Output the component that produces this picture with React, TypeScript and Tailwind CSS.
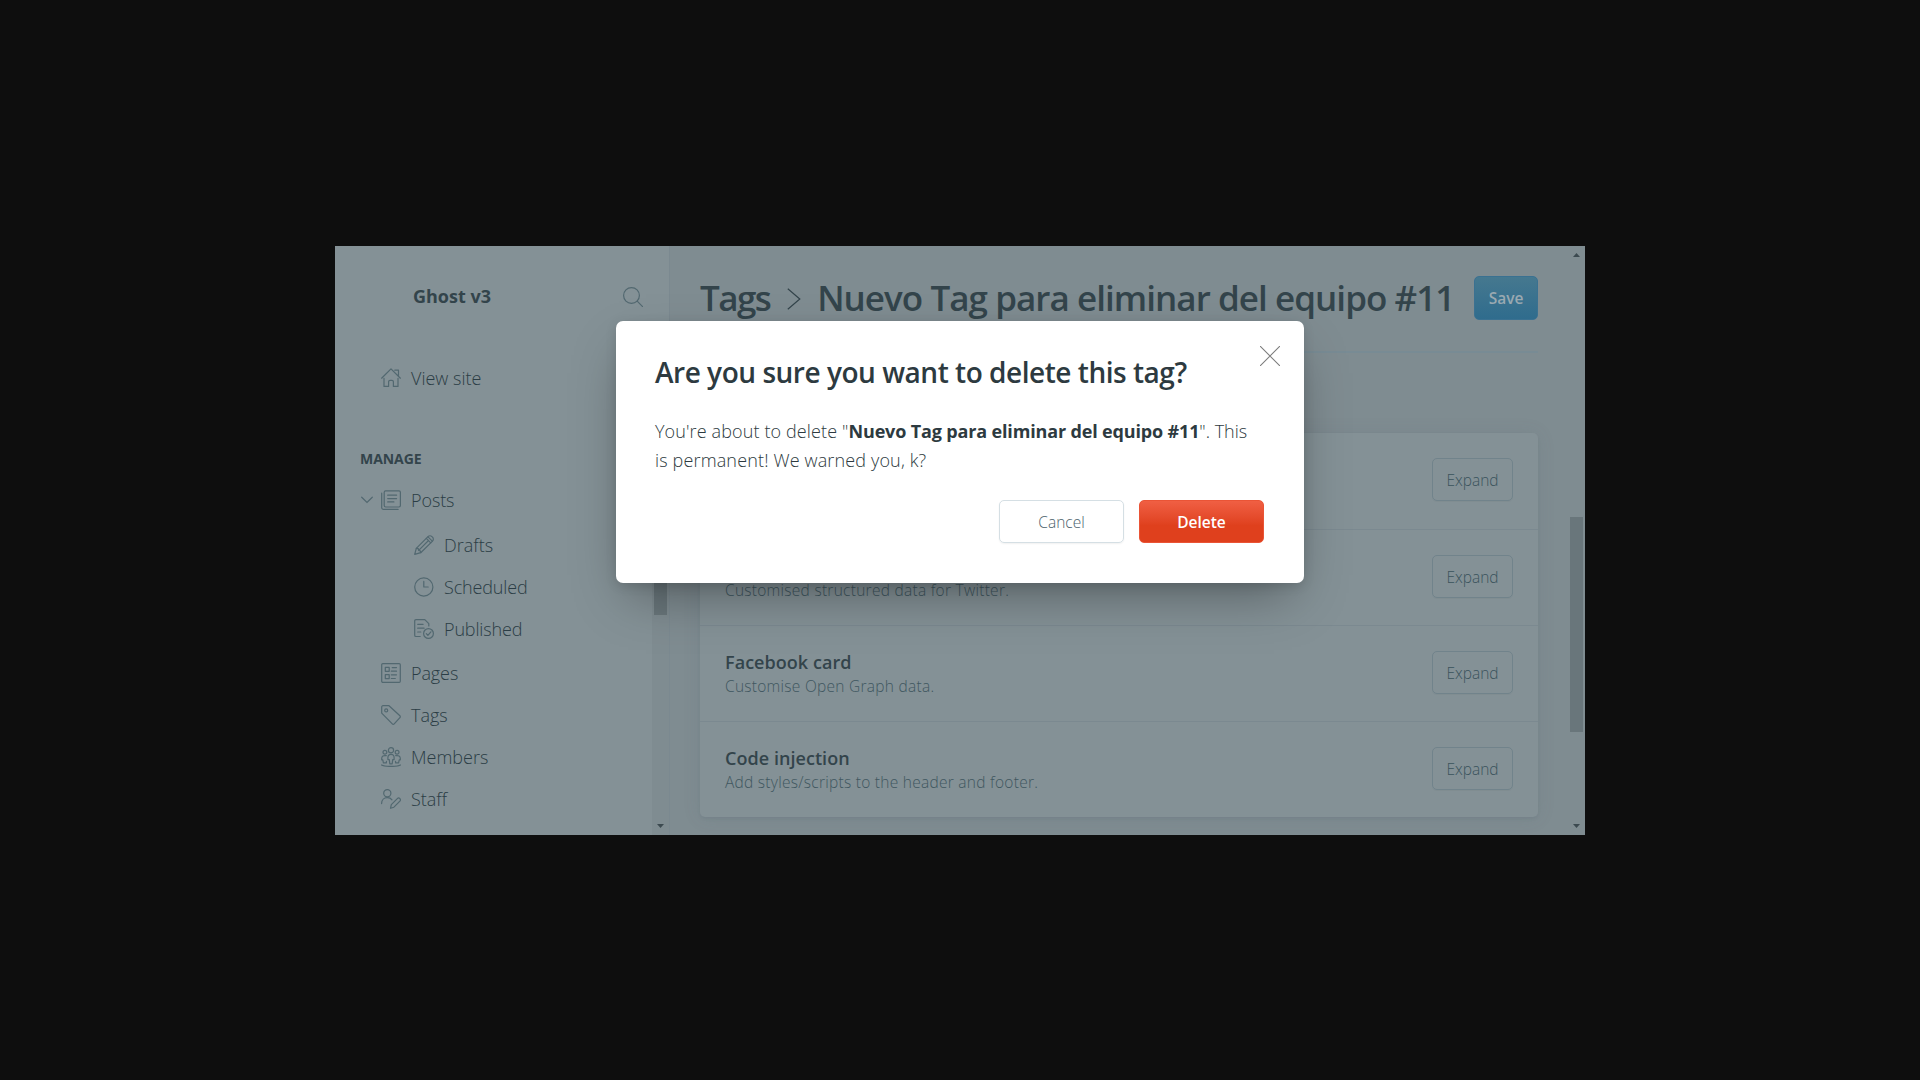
import React, { type ReactNode } from "react";

function Icon({ children, className = "" }: { children: ReactNode; className?: string }) {
  return (
    <svg
      viewBox="0 0 20 20"
      fill="none"
      stroke="#526870"
      strokeWidth="1.200"
      strokeLinecap="round"
      strokeLinejoin="round"
      className={`size-5 shrink-0 ${className}`}
    >
      {children}
    </svg>
  );
}

const icons = {
  search: (
    <>
      <circle cx="8.5" cy="8.5" r="7.9" />
      <path d="M14.2 14.2 19.6 19.6" />
    </>
  ),
  home: (
    <>
      <path d="M.6 10.2 10 .9l9.4 9.3M13.8 2.2h3.7v5.6" />
      <path d="M3 10.3v8.1h4.6v-4.6a1.5 1.5 0 0 1 1.5-1.5h1.8a1.5 1.5 0 0 1 1.5 1.5v4.6H17v-8.1" />
    </>
  ),
  posts: (
    <>
      <rect x="3.2" y=".8" width="16.2" height="16.2" rx="1.4" />
      <path d="M.7 3.2v14.4a1.8 1.8 0 0 0 1.8 1.8h14.6M6.7 5.2h8.9M6.7 8.6h8.9M6.7 11.9h6.2" />
    </>
  ),
  drafts: (
    <>
      <path d="m.7 19.3 1.6-6L14 1.6a2.7 2.7 0 0 1 3.9 0l.6.6a2.7 2.7 0 0 1 0 3.9L6.7 17.7l-6 1.6Z" />
      <path d="m12.3 3.4 4.4 4.400M14 1.800l4.300 4.300M2.300 13.300l2 .4.300 1.700 1.700.4.400 1.900M5.200 14.800l9.300-9.300" />
    </>
  ),
  scheduled: (
    <>
      <circle cx="9.8" cy="10" r="9.1" />
      <path d="M9.8 4.4V10h4.4" />
    </>
  ),
  published: (
    <>
      <path d="M6.2 17.5H2A1.3 1.3 0 0 1 .7 16.200V1.900A1.300 1.300 0 0 1 2 .6h8.800L14.800 4.600V7M3.700 5.300h5.400M3.700 9.200h6.400M3.700 13h3.100" />
      <circle cx="14.500" cy="14.500" r="4.900" />
      <path d="m12.300 14.700 1.600 1.700 3-3.600" />
    </>
  ),
  pages: (
    <>
      <rect x=".7" y=".7" width="18.6" height="18.6" rx="1.1" />
      <rect x="4.300" y="4.400" width="3.900" height="3.900" />
      <rect x="4.300" y="11.700" width="3.900" height="3.900" />
      <path d="M11.200 4.600h4.300M10.300 8.200h5.200M10.300 11.800h5.200M10.300 15.500h4" />
    </>
  ),
  tags: (
    <>
      <path d="M.7 2A1.300 1.300 0 0 1 2 .7h6l10.900 10.100a1.300 1.300 0 0 1 0 1.900l-5.700 6.200a1.300 1.300 0 0 1-1.900 0L.7 8.200V2Z" />
      <circle cx="5.200" cy="5.400" r="1.500" />
    </>
  ),
  members: (
    <>
      <circle cx="10" cy="3.200" r="2.600" />
      <circle cx="3.900" cy="5.300" r="1.900" />
      <circle cx="16.100" cy="5.300" r="1.900" />
      <path d="M10 7.300c-2 0-3.100 1.300-3.100 3.200v2.100h1.400l.5 4.200h2.400l.5-4.200h1.400v-2.100c0-1.900-1.100-3.200-3.100-3.200Z" />
      <path d="M5.300 8.700C2.400 8.100.7 9.300.7 11.500v1.300h1.100l.6 3h2.900l.2-1.500M14.700 8.700c2.900-.6 4.600.6 4.600 2.800v1.300h-1.100l-.6 3h-2.900l-.2-1.500M.6 18c2.500 1.900 16.300 1.900 18.800 0" />
    </>
  ),
  staff: (
    <>
      <circle cx="6.300" cy="4.200" r="3.600" />
      <path d="M.6 14.600C.6 10.800 3.200 8.600 6.300 8.600c2 0 3.700.8 4.700 2.200M9.500 19.300l.8-3.700 6-6a1.800 1.800 0 0 1 2.600 2.600l-6 6-3.400 1.100Z" />
    </>
  ),
};

function NavItem({ icon, label, sub = false, open = false, tracking = "" }: {
  icon: keyof typeof icons;
  label: string;
  sub?: boolean;
  open?: boolean;
  tracking?: string;
}) {
  return (
    <div className={`flex h-[42px] items-center ${sub ? "pl-[79px]" : open ? "pl-[26px]" : "pl-[46px]"}`}>
      {open && (
        <svg viewBox="0 0 12 8" fill="none" stroke="#526870" strokeWidth="1.200" strokeLinecap="round" className="mr-2 h-2 w-3">
          <path d="M.7 1.200 6 6.400l5.300-5.200" />
        </svg>
      )}
      <Icon>{icons[icon]}</Icon>
      <span className={`ml-2.5 text-[18px] leading-[42px] font-light whitespace-nowrap text-[#2b3d45] ${tracking}`}>{label}</span>
    </div>
  );
}

function SettingRow({ title, text, first = false }: { title?: string; text?: string; first?: boolean }) {
  return (
    <div className={`flex h-24 justify-between pr-[25px] pl-[25px] ${first ? "" : "border-t border-[#7b8990]"}`}>
      <div className="pt-6 whitespace-nowrap">
        <div className="h-6 text-[18px] leading-6 font-semibold tracking-[0.050px] text-[#33444b]">{title}</div>
        <div className="text-[15.500px] leading-6 font-light tracking-[0.270px] text-[#405760]">{text}</div>
      </div>
      <button className="mt-[25px] h-[43px] w-[81px] rounded-[5px] border border-[#71838b] text-[15.500px] leading-[42px] font-light text-[#3a535c] shadow-[0_1px_1px_rgba(0,0,0,0.03)]">
        Expand
      </button>
    </div>
  );
}

function Arrow({ up = false }: { up?: boolean }) {
  return (
    <svg viewBox="0 0 7 4" className="h-1 w-[7px]" fill="#3c4a50">
      <path d={up ? "M0 4h7L3.500 0Z" : "M0 0h7L3.500 4Z"} />
    </svg>
  );
}

export default function App() {
  return (
    <div className="flex h-[1080px] w-[1920px] items-start overflow-hidden bg-[#0e0e0e] pt-[246px] pl-[335px] font-['Open_Sans',sans-serif]">
      <div className="relative flex h-[589px] w-[1250px] overflow-hidden bg-[#7f8c91]">
        <aside className="flex w-[335px] shrink-0 border-r border-[#7b8990] bg-[#849196]">
          <div className="w-[317px] shrink-0">
            <header className="flex h-[101px] items-center justify-between pr-[9px] pl-[78px]">
              <span className="-mt-px text-[18px] leading-6 font-bold text-[#33444b]">Ghost v3</span>
              <Icon>{icons.search}</Icon>
            </header>
            <nav className="mt-2.5">
              <NavItem icon="home" label="View site" />
              <h2 className="mt-[50px] pl-[25px] text-[14px] leading-5 font-bold tracking-[-0.050px] text-[#33444b]">MANAGE</h2>
              <div className="mt-2.5">
                <NavItem icon="posts" label="Posts" open tracking="tracking-[-0.100px]" />
              </div>
              <div className="mt-[3px]">
                <NavItem icon="drafts" label="Drafts" sub />
                <NavItem icon="scheduled" label="Scheduled" sub tracking="tracking-[-0.150px]" />
                <NavItem icon="published" label="Published" sub tracking="tracking-[-0.150px]" />
              </div>
              <div className="mt-0.5">
                <NavItem icon="pages" label="Pages" tracking="tracking-[-0.100px]" />
                <NavItem icon="tags" label="Tags" />
                <NavItem icon="members" label="Members" />
                <NavItem icon="staff" label="Staff" />
              </div>
            </nav>
          </div>
          <div className="mt-[100px] flex w-[17px] shrink-0 flex-col items-center bg-[#7f8c91]">
            <div className="mt-20 h-[189px] w-[13px] bg-[#69767b]" />
            <div className="mt-auto mb-[7px] flex"><Arrow /></div>
          </div>
        </aside>

        <main className="w-[898px] shrink-0 pr-[30px] pl-[30px]">
          <header className="flex h-[107px] items-center justify-between border-b-2 border-[#788b94]">
            <h1 className="flex items-center text-[35px] leading-[44px] font-semibold tracking-[-0.950px] whitespace-nowrap text-[#33444b]">
              <span className="-mt-px tracking-[-1.600px]">Tags</span>
              <svg viewBox="0 0 14 22" fill="none" stroke="#33444b" strokeWidth="1.200" className="mr-4 ml-[17px] h-[22px] w-3.5">
                <path d="m.8.8 12 10.200-12 10.200" />
              </svg>
              <span className="-mt-px">Nuevo Tag para eliminar del equipo #11</span>
            </h1>
            <button className="-mt-px h-11 w-16 shrink-0 rounded-[5px] border border-[#3a7191] bg-linear-to-b from-[#45788f] to-[#2f6c8d] text-[15.500px] leading-[43px] font-semibold text-[#9aa9b1]">
              Save
            </button>
          </header>
          <section className="mt-20 h-96 rounded-[5px] bg-[#849196] shadow-[0_1px_18px_rgba(70,90,110,0.120),0_2px_3px_rgba(70,90,110,0.100)]">
            <SettingRow first />
            <SettingRow text="Customised structured data for Twitter." />
            <SettingRow title="Facebook card" text="Customise Open Graph data." />
            <SettingRow title="Code injection" text="Add styles/scripts to the header and footer." />
          </section>
        </main>

        <div className="flex w-[17px] shrink-0 flex-col items-center bg-[#7f8c91]">
          <div className="mt-[7px] flex"><Arrow up /></div>
          <div className="mt-[260px] h-[215px] w-[13px] bg-[#69767b]" />
          <div className="mt-auto mb-[7px] flex"><Arrow /></div>
        </div>

        <div
          role="dialog"
          className="absolute top-[75px] left-[281px] h-[262px] w-[688px] rounded-[7px] bg-white pt-[31px] pr-10 pl-[39px] text-[#2d3a40] shadow-[0_22px_50px_-12px_rgba(0,0,0,0.360),0_3px_12px_rgba(0,0,0,0.120)]"
        >
          <svg viewBox="0 0 20 20" fill="none" stroke="#7d7d7d" strokeWidth="1.100" className="absolute top-[25px] right-6 size-5">
            <path d="m0 0 20 20M20 0 0 20" />
          </svg>
          <h1 className="text-[28px] leading-10 font-semibold tracking-[-0.470px] whitespace-nowrap">
            Are you sure you want to delete this tag?
          </h1>
          <p className="mt-[25px] text-[18px] leading-[29px] font-light whitespace-nowrap">
            <span className="tracking-[0.120px]">You're about to delete "</span>
            <strong className="font-bold tracking-[-0.150px]">Nuevo Tag para eliminar del equipo #11</strong>
            <span>". This</span>
            <br />
            <span className="tracking-[0.150px]">is permanent! We warned you, k?</span>
          </p>
          <div className="mt-[25px] flex justify-end gap-[15px] text-[15.500px]">
            <button className="h-[43px] w-[125px] rounded-[5px] border border-[#d5dfe4] pt-px leading-[41px] font-light text-[#4c626c] shadow-[0_1px_2px_rgba(0,0,0,0.060)]">
              Cancel
            </button>
            <button className="h-[43px] w-[125px] rounded-[5px] border border-[#ea5436] bg-linear-to-b from-[#f05f43] via-[#df401d] via-60% to-[#df401d] pt-px leading-[41px] font-semibold text-white">
              Delete
            </button>
          </div>
        </div>
      </div>
    </div>
  );
}
